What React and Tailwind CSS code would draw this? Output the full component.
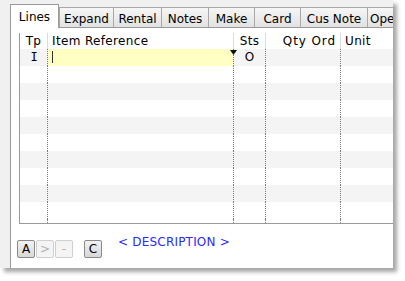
import React from "react";

const font = { fontFamily: '"DejaVu Sans", Verdana, sans-serif' };

function Tab({ label, w, selected, left }) {
  if (selected) {
    return (
      <div
        className={`h-[24px] ${w} shrink-0 -mb-px relative z-10 flex items-start justify-center pt-[3px] bg-white border border-b-0 border-[#9a9a9a] text-[12px] text-black`}
      >
        {label}
      </div>
    );
  }
  return (
    <div
      className={`h-[20px] ${w} shrink-0 flex items-start ${left ? "justify-start pl-[2px]" : "justify-center"} pt-[2px] border-t border-l border-[#a8a8a8] bg-gradient-to-b from-[#f6f6f6] to-[#e2e2e2] text-[12px] text-black whitespace-nowrap overflow-hidden`}
    >
      {label}
    </div>
  );
}

function Row({ i }) {
  const gray = i % 2 === 0;
  const bg = gray ? "bg-[#f4f4f4]" : "bg-white";
  const first = i === 0;
  return (
    <div className={`flex h-[17px] ${bg} text-[12px] leading-[17px]`}>
      <div
        className="w-[28px] border-r border-dotted border-[#7a7a7a] text-center pl-[1px]"
        style={{ fontFamily: '"DejaVu Sans Mono", monospace' }}
      >
        {first ? "I" : ""}
      </div>
      <div className={`w-[186px] border-r border-dotted border-[#7a7a7a] relative ${first ? "bg-[#ffffc4]" : ""}`}>
        {first && (
          <>
            <div className="absolute left-[4px] top-[2px] w-px h-[12px] bg-[#333]" />
            <svg className="absolute right-[-4px] top-[1px]" width="7" height="5" viewBox="0 0 7 5">
              <path d="M0 0 H7 L3.5 5 Z" fill="#111" />
            </svg>
          </>
        )}
      </div>
      <div className="w-[32px] border-r border-dotted border-[#7a7a7a] text-center">
        {first ? "O" : ""}
      </div>
      <div className="w-[75px] border-r border-dotted border-[#7a7a7a]" />
      <div className="flex-1" />
    </div>
  );
}

export default function App() {
  return (
    <div className="w-[405px] h-[281px] bg-white overflow-hidden" style={font}>
      <div className="w-[393px] h-[268px] bg-[#f0f0f0] shadow-[4px_4px_4px_rgba(0,0,0,0.35)] flex flex-col pt-[4px] pl-[10px] overflow-hidden">
        <div className="flex items-end h-[23px] shrink-0">
          <Tab label="Lines" w="w-[49px]" selected />
          <Tab label="Expand" w="w-[54px]" />
          <Tab label="Rental" w="w-[48px]" />
          <Tab label="Notes" w="w-[47px]" />
          <Tab label="Make" w="w-[46px]" />
          <Tab label="Card" w="w-[46px]" />
          <Tab label="Cus Note" w="w-[67px]" />
          <Tab label="Ope" w="w-[40px]" left />
        </div>
        <div className="flex-1 bg-white border-l border-t border-[#9a9a9a] flex flex-col pl-[8px] pt-[5px]">
          <div className="h-[191px] border-l border-b border-[#9a9a9a] flex flex-col">
            <div className="flex h-[16px] text-[12px] leading-[16px] text-black tracking-[0.35px]">
              <div className="w-[28px] border-r border-[#dcdcdc] text-center">Tp</div>
              <div className="w-[186px] border-r border-[#dcdcdc] pl-[4px]">Item Reference</div>
              <div className="w-[32px] border-r border-[#dcdcdc] text-center">Sts</div>
              <div className="w-[75px] border-r border-[#dcdcdc] text-right pr-[4px] tracking-[0.9px]">Qty Ord</div>
              <div className="flex-1 pl-[4px]">Unit</div>
            </div>
            <div className="flex-1 flex flex-col">
              {Array.from({ length: 10 }).map((_, i) => (
                <Row key={i} i={i} />
              ))}
              <div className="flex-1 flex">
                <div className="w-[28px] border-r border-dotted border-[#7a7a7a]" />
                <div className="w-[186px] border-r border-dotted border-[#7a7a7a]" />
                <div className="w-[32px] border-r border-dotted border-[#7a7a7a]" />
                <div className="w-[75px] border-r border-dotted border-[#7a7a7a]" />
              </div>
            </div>
          </div>
          <div className="flex items-start mt-[9px] -ml-[2px]">
            <div className="flex gap-[1px] mt-[7px]">
              <div className="w-[18px] h-[18px] border border-[#8a8a8a] rounded-[2px] bg-gradient-to-b from-[#f2f2f2] to-[#d8d8d8] text-[12px] leading-[16px] text-center text-black">A</div>
              <div className="w-[18px] h-[18px] border border-[#cfcfcf] rounded-[2px] bg-[#f4f4f4] text-[12px] leading-[16px] text-center text-[#b0b0b0]">&gt;</div>
              <div className="w-[18px] h-[18px] border border-[#cfcfcf] rounded-[2px] bg-[#f4f4f4] text-[12px] leading-[16px] text-center text-[#b0b0b0]">-</div>
            </div>
            <div className="ml-[11px] mt-[7px] w-[18px] h-[18px] border border-[#8a8a8a] rounded-[2px] bg-gradient-to-b from-[#f2f2f2] to-[#d8d8d8] text-[12px] leading-[16px] text-center text-black">C</div>
            <div className="ml-[16px] text-[12px] text-[#2a2aff] leading-[16px] mt-[1px] tracking-[0.2px]">&lt; DESCRIPTION &gt;</div>
          </div>
        </div>
      </div>
    </div>
  );
}
